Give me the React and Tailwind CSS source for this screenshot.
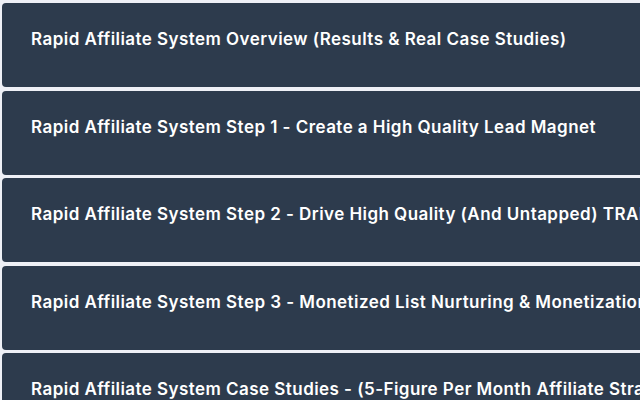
import React from 'react';

const lessons = [
  'Rapid Affiliate System Overview (Results & Real Case Studies)',
  'Rapid Affiliate System Step 1 - Create a High Quality Lead Magnet',
  'Rapid Affiliate System Step 2 - Drive High Quality (And Untapped) TRAFFIC',
  'Rapid Affiliate System Step 3 - Monetized List Nurturing & Monetization Emails',
  'Rapid Affiliate System Case Studies - (5-Figure Per Month Affiliate Strategies)',
];

const App = () => {
  return (
    <div className="w-[640px] h-[400px] overflow-hidden bg-[#eef0f6] pt-[3px] pl-[2px]">
      <div className="flex flex-col gap-[3.5px] w-[760px]">
        {lessons.map((title) => (
          <div
            key={title}
            className="h-[84px] bg-[#2d3b4d] rounded-[4px] pl-[29px] pt-[24px] whitespace-nowrap"
          >
            <h3
              className="text-white text-[17px] leading-[24px] font-semibold tracking-[0.45px]"
              style={{ fontFamily: 'Inter, "Noto Sans", sans-serif' }}
            >
              {title}
            </h3>
          </div>
        ))}
      </div>
    </div>
  );
};

export default App;
